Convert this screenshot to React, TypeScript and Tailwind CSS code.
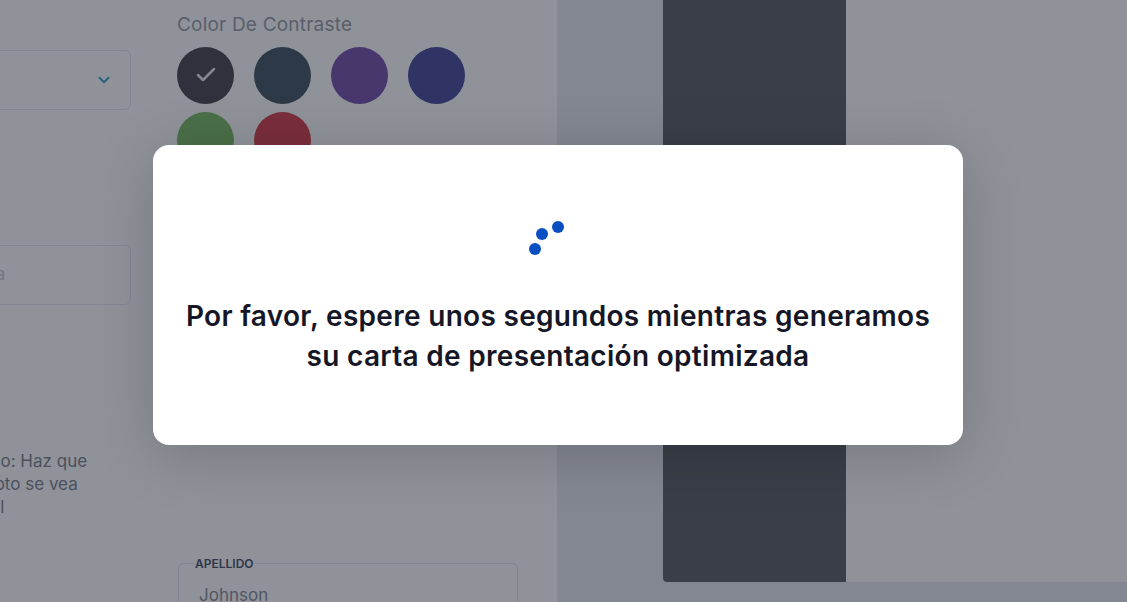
import { Check, ChevronDown } from "lucide-react";

const swatches = [
  { color: "bg-[#4a4b52]", selected: true },
  { color: "bg-[#485865]" },
  { color: "bg-[#7954ad]" },
  { color: "bg-[#4a4f9e]" },
  { color: "bg-[#7ebe67]" },
  { color: "bg-[#d7434f]" },
];

export default function App() {
  return (
    <div
      className="relative h-[602px] w-[1127px] overflow-hidden bg-white"
      style={{ fontFamily: "Inter, 'Noto Sans', sans-serif" }}
    >
      {/* page beneath the overlay */}
      <div className="flex h-full">
        {/* form */}
        <div className="flex w-[557px] shrink-0 gap-[46px] bg-white">
          <div className="-ml-[200px] flex w-[331px] shrink-0 flex-col">
            <div className="mt-[50px] flex h-[60px] items-center justify-end rounded-md border border-[#e6e8f2] pr-[17px]">
              <ChevronDown className="h-[18px] w-[18px] text-[#3aa0c8]" strokeWidth={2.5} />
            </div>
            <div className="mt-[135px] flex h-[60px] items-center rounded-md border border-[#e6e8f2] pl-[22px] text-[17px] text-[#c9ccd6]">
              Nombre de la empresa
            </div>
            <p className="mt-[145px] whitespace-nowrap pl-[115px] text-[17px] leading-[23px] text-[#80848f]">
              Por ejemplo: Haz que
              <br />
              tu nueva foto se vea
              <br />
              profesional
            </p>
          </div>

          <div className="flex w-[341px] shrink-0 flex-col">
            <div className="mt-[11px] text-[19px] tracking-[0.2px] text-[#9b9ea8]">Color De Contraste</div>
            <div className="mt-[7px] flex w-[300px] flex-wrap gap-x-[20px] gap-y-[8px]">
              {swatches.map((s, i) => (
                <div key={i} className={`flex h-[57px] w-[57px] items-center justify-center rounded-full ${s.color}`}>
                  {s.selected && <Check className="h-6 w-6 text-[#e8eaee]" strokeWidth={2.5} />}
                </div>
              ))}
            </div>
            <fieldset className="mt-[386px] ml-[1px] h-[80px] rounded-md border border-[#e3e6f0] px-[15px]">
              <legend className="px-[1px] text-[12px] font-semibold text-[#4b5368]">APELLIDO</legend>
              <div className="mt-[10px] pl-[5px] text-[17px] text-[#8b8e98]">Johnson</div>
            </fieldset>
          </div>
        </div>

        {/* preview */}
        <div className="flex flex-1 flex-col bg-[#e9ebf1] pl-[106px]">
          <div className="flex h-[582px]">
            <div className="w-[183px] rounded-bl-[4px] bg-[#5e6067]" />
            <div className="flex-1 bg-white" />
          </div>
        </div>
      </div>

      {/* overlay */}
      <div className="absolute inset-0 bg-[rgba(17,24,39,0.47)]" />

      {/* modal */}
      <div className="absolute left-[153px] top-[145px] flex h-[300px] w-[810px] flex-col items-center rounded-[16px] bg-white shadow-[0_10px_60px_rgba(0,0,0,0.18)]">
        <svg className="mt-[75px] h-[36px] w-[62px]" viewBox="0 0 62 36">
          <circle cx="8" cy="29" r="6" fill="#0a4fc1" />
          <circle cx="15" cy="14" r="6" fill="#0a4fc1" />
          <circle cx="31" cy="7" r="6" fill="#0a4fc1" />
        </svg>
        <p className="mt-[40px] text-center text-[28px] font-semibold leading-[40px] tracking-[0.3px] text-[#151726]">
          Por favor, espere unos segundos mientras generamos
          <br />
          su carta de presentación optimizada
        </p>
      </div>
    </div>
  );
}
